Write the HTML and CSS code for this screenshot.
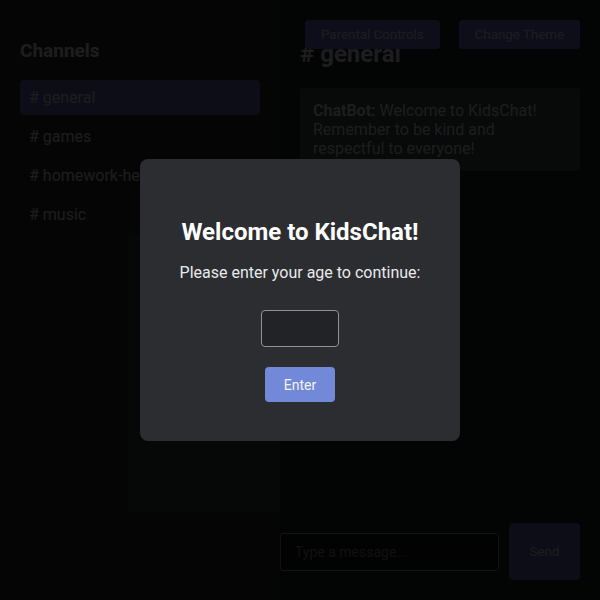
FILE: index.html
```html
<!DOCTYPE html>
<html lang="en">
<head>
<meta charset="utf-8">
<title>KidsChat</title>
<link rel="stylesheet" href="styles.css">
</head>
<body>
<div class="app">
  <aside class="sidebar">
    <h3 class="sidebar-title">Channels</h3>
    <ul class="channel-list">
      <li class="channel active"># general</li>
      <li class="channel"># games</li>
      <li class="channel"># homework-help</li>
      <li class="channel"># music</li>
    </ul>
    <div class="sidebar-panel"></div>
  </aside>
  <main class="chat">
    <div class="top-controls">
      <button class="top-btn">Parental Controls</button>
      <button class="top-btn">Change Theme</button>
    </div>
    <h2 class="chat-title"># general</h2>
    <div class="messages">
      <div class="message"><strong>ChatBot:</strong> Welcome to KidsChat! Remember to be kind and respectful to everyone!</div>
    </div>
    <form class="composer">
      <input class="composer-input" type="text" placeholder="Type a message...">
      <button class="send-btn" type="button">Send</button>
    </form>
  </main>
</div>
<div class="overlay">
  <div class="modal">
    <h2 class="modal-title">Welcome to KidsChat!</h2>
    <p class="modal-text">Please enter your age to continue:</p>
    <input class="age-input" type="text">
    <button class="enter-btn" type="button">Enter</button>
  </div>
</div>
</body>
</html>
```
FILE: styles.css
```css
* { box-sizing: border-box; }
html, body {
  margin: 0;
  height: 100%;
}
body {
  font-family: Roboto, "Noto Sans", sans-serif;
  background: #1e1f22;
  color: #dcddde;
}
.app {
  display: flex;
  height: 100vh;
}
.sidebar {
  width: 280px;
  flex: none;
  background: #2b2d31;
  padding: 20px;
  display: flex;
  flex-direction: column;
}
.sidebar-title {
  font-size: 19px;
  font-weight: 700;
  margin: 19px 0 18px;
}
.channel-list {
  list-style: none;
  margin: 0;
  padding: 0;
}
.channel {
  font-size: 16px;
  padding: 8px 9px;
  margin-bottom: 4px;
  border-radius: 4px;
  white-space: nowrap;
}
.channel.active {
  background: #5f62b0;
}
.sidebar-panel {
  flex: 1;
  margin: 0 -20px 68px 108px;
  background: #33353a;
}
.chat {
  flex: 1;
  min-width: 0;
  position: relative;
  padding: 20px;
  display: flex;
  flex-direction: column;
  background: #1e1f22;
}
.top-controls {
  position: absolute;
  top: 20px;
  right: 20px;
  display: flex;
  gap: 19px;
}
.top-btn {
  font-family: Roboto, sans-serif;
  font-size: 13.333px;
  color: #dcddde;
  background: #6a70d0;
  border: none;
  border-radius: 4px;
  padding: 6px 16px;
  height: 29px;
}
.chat-title {
  font-size: 24px;
  font-weight: 700;
  margin: 20px 0;
}
.messages {
  flex: 1;
}
.message {
  background: #40444b;
  border-radius: 4px;
  padding: 13px;
  font-size: 16px;
}
.message strong { font-weight: 700; }
.composer {
  display: flex;
  justify-content: flex-end;
  align-items: center;
  gap: 10px;
}
.composer-input {
  flex: none;
  width: 219px;
  height: 38px;
  padding: 10px 14px;
  font-family: Roboto, sans-serif;
  font-size: 14px;
  background: #111214;
  color: #dcddde;
  border: 1px solid #8a8d91;
  border-radius: 3px;
}
.composer-input::placeholder { color: #7a7e84; }
.send-btn {
  flex: none;
  font-family: Roboto, sans-serif;
  font-size: 13.333px;
  color: #dcddde;
  background: #5f62b0;
  border: none;
  border-radius: 4px;
  padding: 20px;
  width: 71px;
  height: 57px;
}
.overlay {
  position: fixed;
  inset: 0;
  background: rgba(0, 0, 0, 0.87);
  display: flex;
  align-items: center;
  justify-content: center;
}
.modal {
  width: 320px;
  background: #2b2d31;
  border-radius: 8px;
  padding: 39px 30px 39px;
  text-align: center;
  color: #ffffff;
}
.modal-title {
  font-size: 24px;
  font-weight: 700;
  margin: 20px 0 17px;
  color: #ffffff;
}
.modal-text {
  font-size: 16px;
  margin: 0 0 28px;
  color: #e9eaeb;
  white-space: nowrap;
}
.age-input {
  display: block;
  margin: 0 auto;
  width: 78px;
  height: 37px;
  background: #222327;
  border: 1px solid #8f9296;
  border-radius: 4px;
  color: #fff;
  font-size: 16px;
}
.enter-btn {
  display: block;
  margin: 20px auto 0;
  width: 70px;
  height: 35px;
  background: #7289da;
  color: #f2f3f5;
  border: none;
  border-radius: 4px;
  font-family: Roboto, sans-serif;
  font-size: 14px;
}
```
